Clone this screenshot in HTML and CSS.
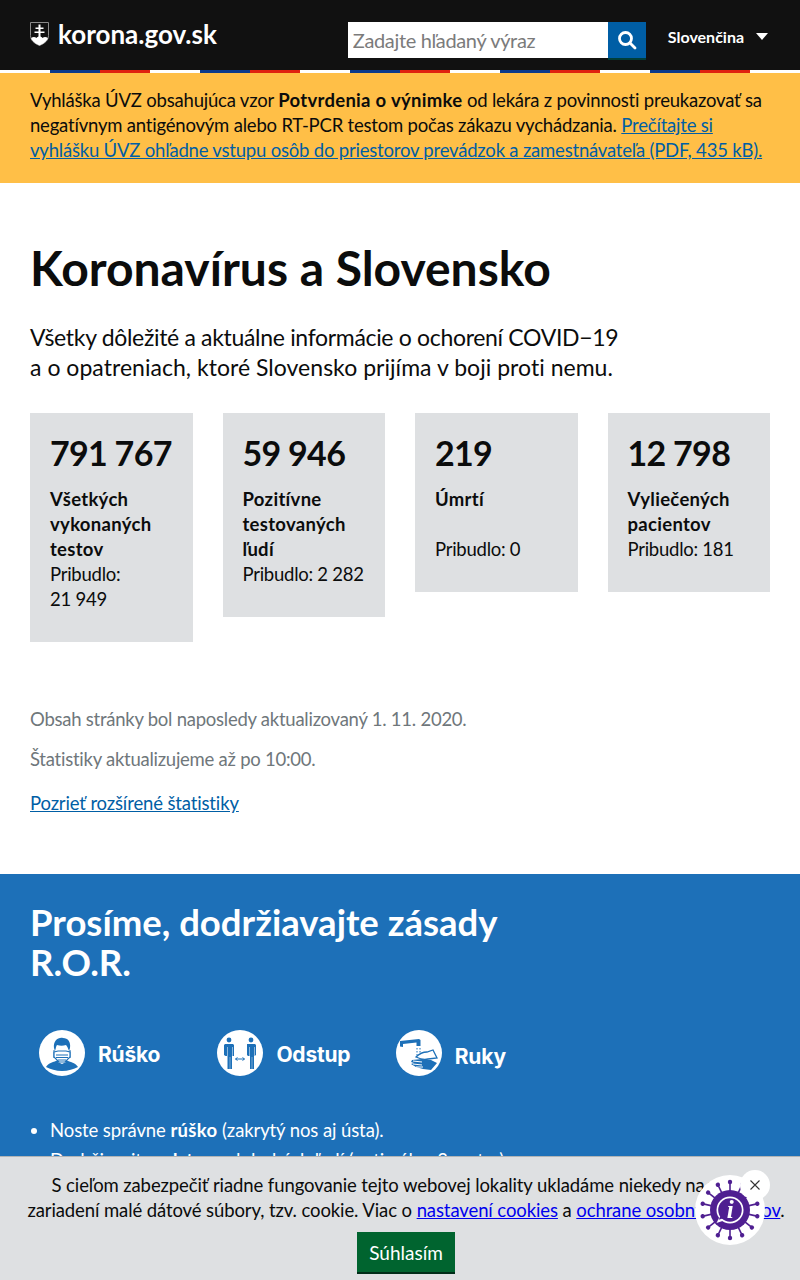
FILE: index.html
```html
<!DOCTYPE html>
<html lang="sk">
<head>
    <meta charset="UTF-8">
    <meta name="viewport" content="width=device-width, initial-scale=1.0">
    <title>Koronavírus a Slovensko | korona.gov.sk</title>
    <link rel="stylesheet" href="styles.css">
</head>
<body>
    <header class="top">
        <a class="logo" href="#">
            <svg class="logo-shield" width="19" height="24" viewBox="0 0 19 24">
                <path d="M.5.5h18v13c0 5-4 8-9 10-5-2-9-5-9-10z" fill="#111" stroke="#8a8a8a"/>
                <path d="M8.500 2.500h2v3h3v1.500h-3v2.500h4v1.500h-4v4h-2v-4h-4v-1.500h4v-2.500h-3v-1.500h3z" fill="#fff"/>
                <path d="M1 16c2-1.500 4-1.500 5.500 0 1-2 5-2 6 0 1.500-1.500 3.500-1.500 5.500 0-1 3.500-4 5.500-8.500 7.500-4.500-2-7.500-4-8.500-7.500z" fill="#fff"/>
            </svg>
            <span>korona.gov.sk</span>
        </a>
        <form class="search">
            <input type="text" placeholder="Zadajte hľadaný výraz">
            <button type="button" aria-label="Hľadať">
                <svg width="20" height="20" viewBox="0 0 20 20" fill="none" stroke="#fff" stroke-width="2.800">
                    <circle cx="8.500" cy="8.500" r="6"/>
                    <path d="M13 13l5 5" stroke-linecap="round"/>
                </svg>
            </button>
        </form>
        <div class="lang">Slovenčina<span class="caret"></span></div>
    </header>
    <div class="stripe"></div>

    <div class="notice">
        Vyhláška ÚVZ obsahujúca vzor <b>Potvrdenia o výnimke</b> od lekára z povinnosti preukazovať sa negatívnym antigénovým alebo RT-PCR testom počas zákazu vychádzania.
        <a href="#">Prečítajte si vyhlášku ÚVZ ohľadne vstupu osôb do priestorov prevádzok a zamestnávateľa (PDF, 435&nbsp;kB).</a>
    </div>

    <main class="intro">
        <h1>Koronavírus a Slovensko</h1>
        <p class="lead">Všetky dôležité a aktuálne informácie o ochorení COVID&minus;19<br><span class="lead-end">a o opatreniach, ktoré Slovensko prijíma v boji proti nemu.</span></p>

        <div class="stats">
            <div class="stat">
                <div class="num">791&nbsp;767</div>
                <b>Všetkých vykonaných testov</b>
                <div>Pribudlo: 21&nbsp;949</div>
            </div>
            <div class="stat">
                <div class="num">59&nbsp;946</div>
                <b>Pozitívne testovaných ľudí</b>
                <div>Pribudlo: 2&nbsp;282</div>
            </div>
            <div class="stat">
                <div class="num">219</div>
                <b>Úmrtí</b>
                <div class="gap">Pribudlo: 0</div>
            </div>
            <div class="stat">
                <div class="num">12&nbsp;798</div>
                <b>Vyliečených pacientov</b>
                <div>Pribudlo: 181</div>
            </div>
        </div>

        <p class="muted">Obsah stránky bol naposledy aktualizovaný 1. 11. 2020.</p>
        <p class="muted">Štatistiky aktualizujeme až po 10:00.</p>
        <p class="more"><a href="#">Pozrieť rozšírené štatistiky</a></p>
    </main>

    <section class="ror">
        <h2>Prosíme, dodržiavajte zásady<br>R.O.R.</h2>
        <div class="ror-icons">
            <div class="ror-item">
                <svg width="46" height="46" viewBox="0 0 46 46">
                    <circle cx="23" cy="23" r="23" fill="#fff"/>
                    <path d="M7 37c2-4 8-5 12-7h8c4 2 10 3 12 7-4 2-10 4-16 4s-12-2-16-4z" fill="#1d70b8"/>
                    <path d="M19 24h8v8l-4 2-4-2z" fill="#fff"/>
                    <path d="M15 18c-1-7 4-11 9-10 5 0 8 4 7 10l-1 3c-1-3-2-5-3-6-3 1-6 1-9 0-1 1-1 3-2 6z" fill="#1d70b8"/>
                    <path d="M15 20v8M31 20v8" stroke="#1d70b8" stroke-width="1"/>
                    <path d="M15 22l4-1h8l4 1v5l-5 5h-6l-5-5z" fill="#fff" stroke="#1d70b8" stroke-width="1.200"/>
                    <path d="M17 25h12M17 27.500h12M19 30h8" stroke="#1d70b8" stroke-width="1"/>
                </svg>
                <span>Rúško</span>
            </div>
            <div class="ror-item">
                <svg width="46" height="46" viewBox="0 0 46 46" fill="#1d70b8">
                    <circle cx="23" cy="23" r="23" fill="#fff"/>
                    <circle cx="12" cy="10" r="2.400"/>
                    <circle cx="34" cy="10" r="2.400"/>
                    <path d="M8 14h8l1 1v11h-1.500v-9h-.5v22h-1.800V27h-.4v12H10.500V17H10v9H8.500l-1.500-1V15z"/>
                    <path d="M30 14h8l1 1v10l-1.500 1v-9H37v22h-1.800V27h-.4v12H33V17h-.5v9H31l-1-1V15z"/>
                    <path d="M18.500 29h9M18.500 29l2-1.500M18.500 29l2 1.500M27.500 29l-2-1.500M27.500 29l-2 1.500" fill="none" stroke="#1d70b8" stroke-width="1"/>
                </svg>
                <span>Odstup</span>
            </div>
            <div class="ror-item ruky">
                <svg width="46" height="46" viewBox="0 0 46 46">
                    <circle cx="23" cy="23" r="23" fill="#fff"/>
                    <path d="M4 11l19-2 1.500 1v6h-4v-3.500L7 14v3l-3-.5z" fill="#1d70b8"/>
                    <path d="M21 18v8M24 18v8" stroke="#1d70b8" stroke-width="1" stroke-dasharray="1.500 1.500"/>
                    <path d="M20 27c3-3 8-5 11-5l6-2 4 8-9 1c-4 1-8 0-12-2z" fill="#fff" stroke="#1d70b8" stroke-width="1.300"/>
                    <path d="M16 30l10-1 9 1 6 3-6 7-8-1-7-2-5-3 3-1-3-1z" fill="#1d70b8"/>
                    <path d="M17 31l9 1M17 34l9 1M20 37l7 0" stroke="#fff" stroke-width="1"/>
                </svg>
                <span>Ruky</span>
            </div>
        </div>
        <ul class="rules">
            <li>Noste správne <b>rúško</b> (zakrytý nos aj ústa).</li>
            <li>Dodržiavajte <b>odstup</b> od druhých ľudí (optimálne 2 metre).</li>
        </ul>
    </section>

    <div class="cookies">
        <p>S cieľom zabezpečiť riadne fungovanie tejto webovej lokality ukladáme niekedy na vašom<br>zariadení malé dátové súbory, tzv. cookie. Viac o <a href="#">nastavení cookies</a> a <a href="#">ochrane osobných údajov</a>.</p>
        <button type="button">Súhlasím</button>
    </div>

    <div class="virus">
        <svg width="70" height="70" viewBox="0 0 70 70">
            <defs>
                <g id="spike">
                    <path d="M35 35V7.500" stroke="#4f1f91" stroke-width="1.600"/>
                    <circle cx="35" cy="7" r="2.200" fill="#4f1f91"/>
                </g>
            </defs>
            <circle cx="35" cy="35" r="35" fill="#fff"/>
            <use href="#spike"/>
            <use href="#spike" transform="rotate(25.700 35 35)"/>
            <use href="#spike" transform="rotate(51.400 35 35)"/>
            <use href="#spike" transform="rotate(77.100 35 35)"/>
            <use href="#spike" transform="rotate(102.900 35 35)"/>
            <use href="#spike" transform="rotate(128.600 35 35)"/>
            <use href="#spike" transform="rotate(154.300 35 35)"/>
            <use href="#spike" transform="rotate(180 35 35)"/>
            <use href="#spike" transform="rotate(205.700 35 35)"/>
            <use href="#spike" transform="rotate(231.400 35 35)"/>
            <use href="#spike" transform="rotate(257.100 35 35)"/>
            <use href="#spike" transform="rotate(282.900 35 35)"/>
            <use href="#spike" transform="rotate(308.600 35 35)"/>
            <use href="#spike" transform="rotate(334.300 35 35)"/>
            <circle cx="35" cy="35" r="20" fill="#4f1f91"/>
            <circle cx="35" cy="35" r="13.500" fill="#fff"/>
            <path d="M24 43l-2.500 5 7.500-2.500z" fill="#fff"/>
            <circle cx="35" cy="35" r="11.800" fill="#4f1f91"/>
            <path d="M25.500 41l-1.800 3.800 5.500-1.800z" fill="#4f1f91"/>
            <text x="35" y="43" class="virus-i">i</text>
        </svg>
        <span class="virus-close">
            <svg width="12" height="12" viewBox="0 0 12 12"><path d="M1.500 1.500l9 9M10.500 1.500l-9 9" stroke="#333" stroke-width="1.100"/></svg>
        </span>
    </div>
</body>
</html>
```

FILE: styles.css
```css
html, body {
    height: 1280px;
    overflow: hidden;
}
body {
    margin: 0;
    font-family: "Lato", "Open Sans", sans-serif;
    font-size: 18.5px;
    line-height: 25px;
    color: #0b0c0c;
    background: #fff;
    letter-spacing: -0.25px;
}
a {
    color: #005ea5;
}
b {
    letter-spacing: 0.3px;
}

.top {
    display: flex;
    align-items: flex-start;
    height: 70px;
    padding: 0 30px;
    box-sizing: border-box;
    background: #111;
    color: #fff;
}
.logo {
    display: flex;
    align-items: center;
    gap: 9px;
    margin-top: 20px;
    height: 28px;
    color: #fff;
    text-decoration: none;
    font-size: 26px;
    font-weight: 700;
    letter-spacing: 0;
}
.logo-shield {
    flex: none;
}
.search {
    display: flex;
    margin: 22px 0 0 131px;
}
.search input {
    width: 260px;
    height: 36px;
    padding: 0 5px;
    box-sizing: border-box;
    border: 0;
    border-radius: 0;
    font: inherit;
    font-size: 20px;
    letter-spacing: -0.35px;
    background: #fff;
}
.search input::placeholder {
    color: #7b7b7b;
}
.search button {
    display: flex;
    align-items: center;
    justify-content: center;
    width: 38px;
    height: 36px;
    padding: 0;
    border: 0;
    background: #005ea5;
    box-shadow: 0 2px 0 #003e3a;
}
.lang {
    display: flex;
    align-items: center;
    margin: 24px 0 0 22px;
    font-size: 16px;
    font-weight: 700;
    letter-spacing: 0;
}
.caret {
    margin-left: 12px;
    border-left: 6px solid transparent;
    border-right: 6px solid transparent;
    border-top: 7px solid #fff;
}
.stripe {
    height: 3px;
    background: repeating-linear-gradient(90deg, #fff 0 50px, #0b3a8c 50px 100px, #e0210f 100px 150px);
}

.notice {
    height: 110px;
    padding: 15px 30px 0;
    box-sizing: border-box;
    background: #ffbf47;
    letter-spacing: -0.2px;
}

.intro {
    padding: 60px 30px 0;
    height: 691px;
    box-sizing: border-box;
}
h1 {
    margin: 0 0 29px;
    font-size: 48px;
    line-height: 50px;
    font-weight: 700;
    letter-spacing: 0;
}
.lead {
    margin: 0 0 31px;
    font-size: 23px;
    line-height: 30px;
    letter-spacing: -0.32px;
}
.lead-end {
    letter-spacing: 0.03px;
}
.stats {
    display: grid;
    grid-template-columns: repeat(4, 1fr);
    gap: 30px;
    align-items: start;
    margin-bottom: 65px;
}
.stat {
    padding: 20px 20px 30px;
    background: #dee0e2;
}
.stat b {
    display: block;
}
.num {
    margin-bottom: 14px;
    font-size: 34px;
    line-height: 40px;
    font-weight: 700;
    letter-spacing: -0.7px;
}
.gap {
    margin-top: 25px;
}
.muted {
    margin: 0 0 15px;
    color: #6f777b;
}
.more {
    margin: 19px 0 0;
    letter-spacing: -0.14px;
}

.ror {
    height: 406px;
    padding: 28px 30px 0;
    box-sizing: border-box;
    background: #1d70b8;
    color: #fff;
}
h2 {
    margin: 0 0 48px;
    font-size: 36.500px;
    line-height: 40px;
    font-weight: 700;
    letter-spacing: 0;
}
.ror-icons {
    display: flex;
    padding-left: 9px;
}
.ror-item {
    display: flex;
    align-items: center;
    gap: 13px;
    width: 178.400px;
    font-family: "Inter", sans-serif;
    font-size: 21px;
    font-weight: 700;
    letter-spacing: -0.2px;
}
.ror-item span {
    margin-top: 2px;
}
.ror-item.ruky span {
    margin-top: 7px;
}
.rules {
    margin: 42px 0 0;
    padding-left: 20px;
    letter-spacing: -0.1px;
}
.rules li {
    margin-bottom: 5px;
}

.cookies {
    position: fixed;
    left: 0;
    right: 0;
    bottom: 0;
    height: 124px;
    padding-top: 16px;
    box-sizing: border-box;
    border-top: 1px solid #b1b4b6;
    background: #dee0e2;
    text-align: center;
    letter-spacing: -0.1px;
}
.cookies p {
    margin: 0 0 9px 12px;
}
.cookies a {
    color: #00e;
}
.cookies button {
    width: 98px;
    height: 40px;
    padding: 0;
    margin-left: 12px;
    border: 0;
    border-radius: 0;
    background: #00642f;
    box-shadow: 0 2px 0 #002d18;
    color: #fff;
    font: inherit;
    font-size: 19px;
}

.virus {
    position: fixed;
    left: 695px;
    top: 1175px;
    width: 70px;
    height: 70px;
}
.virus svg {
    display: block;
}
.virus-i {
    font-family: "Liberation Serif", serif;
    font-size: 25px;
    font-weight: 700;
    font-style: italic;
    text-anchor: middle;
    fill: #fff;
}
.virus-close {
    position: absolute;
    left: 45px;
    top: -5px;
    display: flex;
    align-items: center;
    justify-content: center;
    width: 30px;
    height: 30px;
    border-radius: 50%;
    background: #fff;
}
```
